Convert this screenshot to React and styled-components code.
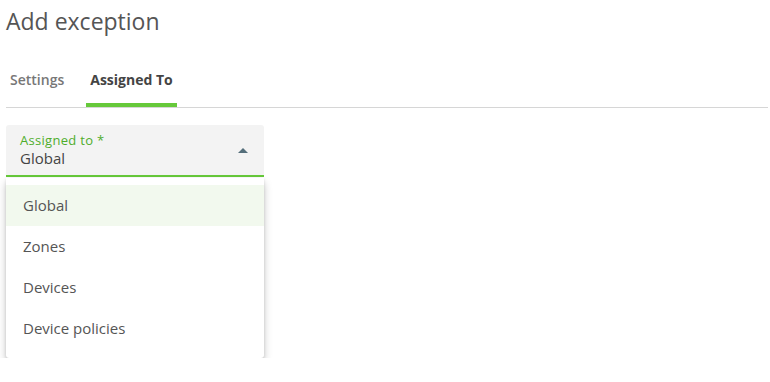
import React from "react";
import styled, { createGlobalStyle } from "styled-components";

const GlobalStyle = createGlobalStyle`
  body {
    margin: 0;
    background: #fff;
    font-family: "Open Sans", "Noto Sans", sans-serif;
  }
`;

const Page = styled.div`
  padding: 0 2px 0 6px;
`;

const Title = styled.h1`
  margin: 0;
  padding-top: 5px;
  height: 55px;
  font-size: 23px;
  line-height: 32px;
  font-weight: 400;
  color: #555;
`;

const TabBar = styled.div`
  display: flex;
  border-bottom: 1px solid #d6d6d6;
  height: 47px;
`;

const Tab = styled.div`
  padding: 0 4px;
  margin-right: 18px;
  font-size: 14px;
  font-weight: ${(p) => (p.active ? 700 : 600)};
  color: ${(p) => (p.active ? "#444" : "#777")};
  line-height: 36px;
  padding-top: 2px;
  border-bottom: 4px solid ${(p) => (p.active ? "#66c93a" : "transparent")};
  box-sizing: border-box;
  height: 47px;
`;

const Field = styled.div`
  margin-top: 17px;
  width: 258px;
  position: relative;
`;

const SelectBox = styled.div`
  height: 52px;
  box-sizing: border-box;
  background: #f3f3f3;
  border-radius: 3px 3px 0 0;
  border-bottom: 2px solid #66c93a;
  padding: 6px 14px 0 14px;
  display: flex;
  align-items: center;
  justify-content: space-between;
`;

const Texts = styled.div`
  display: flex;
  flex-direction: column;
`;

const Label = styled.span`
  font-size: 13px;
  line-height: 16px;
  letter-spacing: 0.3px;
  color: #4fad2c;
  margin-top: -7px;
`;

const Value = styled.span`
  font-size: 15px;
  line-height: 20px;
  color: #444;
`;

const Caret = styled.span`
  width: 0;
  height: 0;
  border-left: 5px solid transparent;
  border-right: 5px solid transparent;
  border-bottom: 5px solid #546e7a;
  margin-right: 2px;
  margin-top: -6px;
`;

const Menu = styled.ul`
  list-style: none;
  margin: 1px 0 0;
  padding: 7px 0 9px;
  background: #fff;
  border-radius: 0 0 3px 3px;
  box-shadow: 0 5px 8px rgba(0, 0, 0, 0.22), 0 1px 3px rgba(0, 0, 0, 0.12);
`;

const Item = styled.li`
  height: 41px;
  display: flex;
  align-items: center;
  padding: 0 17px;
  font-size: 15px;
  color: #555;
  padding-bottom: 2px;
  box-sizing: border-box;
  background: ${(p) => (p.selected ? "#f2f9ee" : "#fff")};
`;

const options = ["Global", "Zones", "Devices", "Device policies"];

export default function App() {
  return (
    <Page>
      <GlobalStyle />
      <Title>Add exception</Title>
      <TabBar>
        <Tab>Settings</Tab>
        <Tab active>Assigned To</Tab>
      </TabBar>
      <Field>
        <SelectBox>
          <Texts>
            <Label>Assigned to *</Label>
            <Value>Global</Value>
          </Texts>
          <Caret />
        </SelectBox>
        <Menu>
          {options.map((o) => (
            <Item key={o} selected={o === "Global"}>
              {o}
            </Item>
          ))}
        </Menu>
      </Field>
    </Page>
  );
}
